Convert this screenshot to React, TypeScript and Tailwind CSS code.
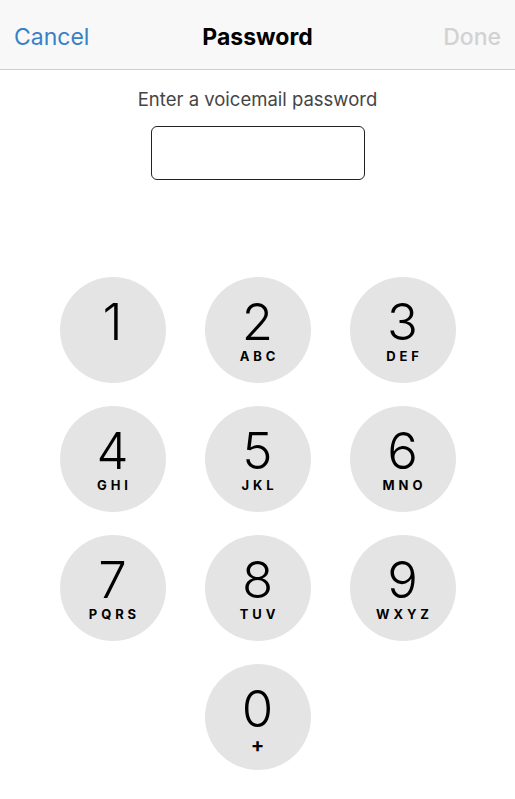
const keys: { d: string; l: string }[] = [
  { d: '1', l: '' },
  { d: '2', l: 'ABC' },
  { d: '3', l: 'DEF' },
  { d: '4', l: 'GHI' },
  { d: '5', l: 'JKL' },
  { d: '6', l: 'MNO' },
  { d: '7', l: 'PQRS' },
  { d: '8', l: 'TUV' },
  { d: '9', l: 'WXYZ' },
];

function Key({ d, l }: { d: string; l: string }) {
  return (
    <button className="w-[106px] h-[106px] rounded-full bg-[#e4e4e4] flex flex-col items-center pt-[20px] text-black">
      <span className="text-[51px] leading-[50px] font-light">{d}</span>
      <span className="mt-[3px] text-[13px] leading-none font-bold tracking-[0.3em] pl-[0.3em]">{l}</span>
    </button>
  );
}

export default function App() {
  return (
    <div className="w-[515px] h-[799px] bg-white font-['Inter',sans-serif] overflow-hidden">
      <div className="h-[70px] bg-[#f8f8f8] border-b border-[#cfcfcf] flex items-center justify-between px-[14px] pt-[6px]">
        <button className="text-[23px] text-[#3a80c6] w-[90px] text-left">Cancel</button>
        <div className="text-[23px] font-bold text-black">Password</div>
        <button className="text-[23px] font-medium text-[#d2d2d2] w-[90px] text-right">Done</button>
      </div>

      <div className="flex flex-col items-center pt-[17px]">
        <div className="text-[18.5px] text-[#454545] leading-[24px]">Enter a voicemail password</div>
        <div className="mt-[15px] w-[214px] h-[54px] rounded-[6px] border-[1.5px] border-[#222]" />
      </div>

      <div className="grid grid-cols-[106px_106px_106px] gap-x-[39px] gap-y-[23px] justify-center mt-[97px]">
        {keys.map((k) => (
          <Key key={k.d} d={k.d} l={k.l} />
        ))}
        <div />
        <button className="w-[106px] h-[106px] rounded-full bg-[#e4e4e4] flex flex-col items-center pt-[20px] text-black">
          <span className="text-[51px] leading-[50px] font-light">0</span>
          <span className="text-[20px] leading-none font-bold mt-[1px]">+</span>
        </button>
        <div />
      </div>
    </div>
  );
}
